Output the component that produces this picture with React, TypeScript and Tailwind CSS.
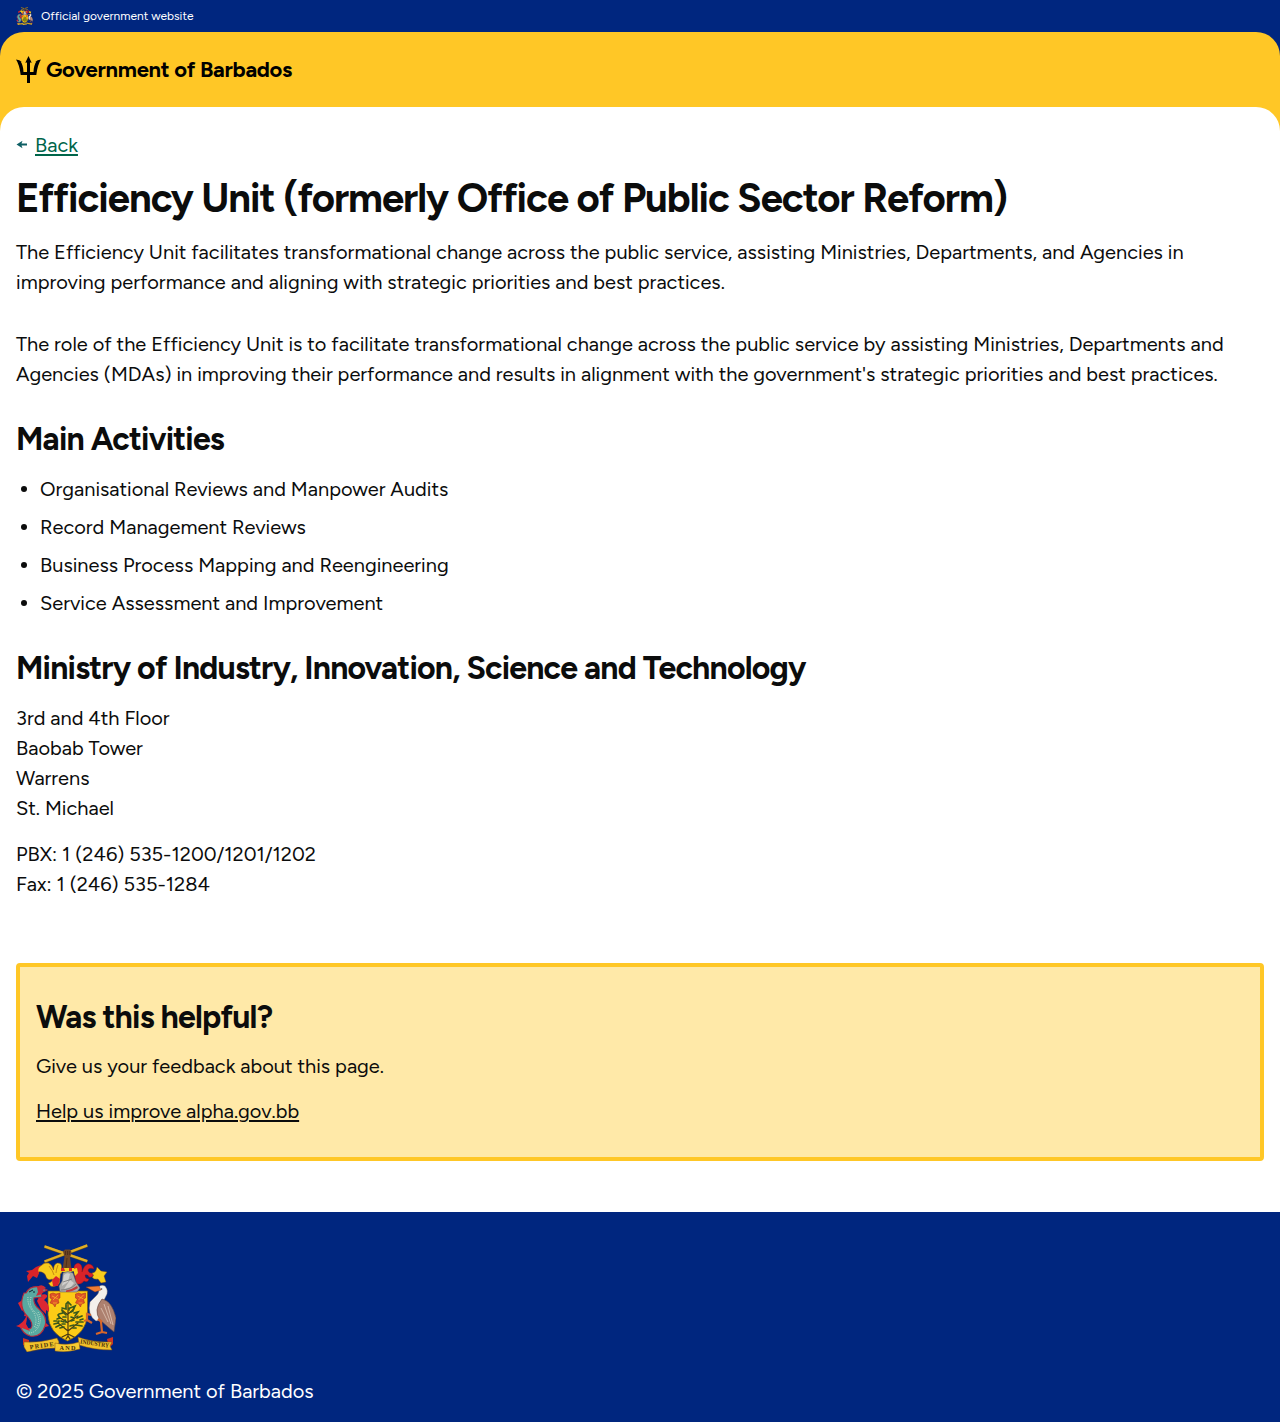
import React from 'react';

function Crest({ className }: { className: string }) {
  return (
    <svg viewBox="0 0 100 108" className={className} aria-label="Coat of arms of Barbados">
      {/* crossed sugar canes held by an arm */}
      <g strokeLinecap="butt" fill="none">
        <path d="M28.500 2.600 71.300 17.300M28.500 17.700 71.300 1.600" stroke="#7a5a10" strokeWidth="3" />
        <path d="M28.500 2.400 71.300 17.100M28.500 17.500 71.300 1.400" stroke="#dfae28" strokeWidth="2.200" />
      </g>
      <path d="M47 7.500 49 5.500 54 5.500 55.500 8 55 11 54 13 55.500 25 46.500 25 48.500 13Z" fill="#6d4426" />
      <path d="M49.500 7v4M51.500 7v4M53.300 7v4M51 14l-1 10" stroke="#3a2110" strokeWidth=".6" fill="none" />
      {/* mantling */}
      <path d="M24.500 22q4-4 8-3 4 2 5 7 0-6 4-7 5 0 4 5 2 4-1 6l-1 9q-4 5-9 3l-2-3q4-1 4-4-4 2-6-1-1-5-5-6-4-1-3 2-5-3 2-8Z" fill="#f8cc1c" stroke="#8f4a10" strokeWidth=".5" />
      <path d="M33 22q4 5 5 9M42 21q-2 5-2 8" stroke="#a8600f" strokeWidth=".6" fill="none" />
      <path d="M10 27l6-1 4-3 5-2q-4 4-2 8-1 3-2 5l-4-2-5 6-1-6 2-3Z" fill="#d92329" />
      <path d="M36 36l4-4 4 3-2 7-5 0Z" fill="#d92329" />
      <path d="M58 27q-1-7 4-8 5 1 4 9 2-7 6-8 5 0 6 5-5-2-6 1 1 4 6 3-1 5-5 4-1-3-4-2 0 4 4 4-1 4-5 2-3 4-8 3Z" fill="#d92329" stroke="#8c1014" strokeWidth=".4" />
      <path d="M57 25l4-1 1 5-3 3M65 31l4-3" fill="#f8cc1c" />
      <path d="M76 29q4 0 5-6l4 4 6 1-3 4 2 6-5 1-3-4q-4 1-6-2 3-1 0-4Z" fill="#f8cc1c" stroke="#8f4a10" strokeWidth=".4" />
      <path d="M43 27v-3h15v3l-7 2Z" fill="#f8cc1c" />
      <path d="M45 24h3l1 3h-4ZM53 24h3l0 3h-3Z" fill="#d92329" />
      {/* shield and helmet */}
      <path d="M32 47H71.500V71Q70 89 51.500 97 33 89 32 71Z" fill="#fccb16" stroke="#7d5b11" strokeWidth=".7" />
      <path d="M47 29q5-3 10 0l3 9 4 6-3 4-17 0-1-6 3-5Z" fill="#aaa9a7" stroke="#595757" strokeWidth=".5" />
      <path d="M48 31q3-3 6-1l-2 8-6 4ZM54 36l4 3-3 4-7 2Z" fill="#d2d0cd" />
      <path d="M45 46q9 0 15-6M47 38l9-3" stroke="#6d6b6a" strokeWidth=".7" fill="none" />
      <path d="M50 46.500q6-1 11-4.500l1 2q-6 4-12 4Z" fill="#c43a38" />
      {/* flowers */}
      <g fill="#df5328" stroke="#a32b1b" strokeWidth=".5">
        <path d="M34 50l3-1 3 1 4-1v5l-2 1 1 4-3 1-1 3-2-3-3-1 2-4-2-1Z" />
        <path d="M59.500 50l3-1 3 1 4-1v5l-2 1 1 4-3 1-1 3-2-3-3-1 2-4-2-1Z" />
      </g>
      <path d="M36 52l6 3M42 51l-5 5M37 59l4 0M61.500 52l6 3M67.500 51l-5 5M62.500 59l4 0" stroke="#f9ae26" strokeWidth=".8" />
      {/* bearded fig tree */}
      <g fill="none" strokeLinecap="round">
        <path d="M52 59v34M52 87l-10-8M52 87l10-8M52 79l-9-6M52 78l10-6M52 71l-6-5M52 70l6-5M52 90l-6 3M52 90l6 3M52 92l-2 3M52 92l2 3" stroke="#4b3a12" strokeWidth="1.200" />
        <path d="M38 80l4-1 1-2M40 83l4-2M41 75l3-1-2-3M43 70l4-1-1-3M46 64l4 1 0-4M50 60l2-2 3 3M54 64l5-2-2 4M58 69l4-1-3 4M61 74l5-2M60 78l7 0M60 81l6 1M44 84l4-1M45 77l3 1M55 73l3 1M54 82l4-1M48 69l2 2M55 68l2-1M47 73l3 0M49 76l1 2M55 77l3-1M46 80l3 0M57 84l3 0M64 76l3-1M38 77l3 0M53 66l0-2" stroke="#38591d" strokeWidth="1.700" />
      </g>
      {/* dolphin */}
      <path d="M24 51q8-2 7 2l-3 3q6 4 5 12l-3-2 0 4-5-5-4-8ZM2 59l6-4 2 9-4 3ZM10 66l-2 6 6 1ZM29 78l4 4-7 2Z" fill="#dc2733" />
      <path d="M10 49q4-8 14-6l7 3-6 3 1 4-8 1q-1 6 5 11 9 8 6 17-4 12-15 10-7-2-10-10l4 1q4 3 7 1 3-4-3-11-10-10-4-24Z" fill="#58a9a1" stroke="#b5283a" strokeWidth="1.100" />
      <path d="M15 53q-3 10 6 17 4 8-2 15M12 53q-1 8 6 16 4 8 0 15M22 68q5 9-1 17-3 4-8 4" stroke="#c3e3d0" strokeWidth="1" strokeDasharray="1 1.200" fill="none" />
      <path d="M0 82q7-2 11-11 0 6-1 9l4 7q-5-2-14-5Z" fill="#dc2733" />
      <path d="M21 43q5-4 9 1l-2 1-2 5-6 2 2-4Z" fill="#c92a37" />
      <path d="M13 48l4-2M17 48h2" stroke="#123" strokeWidth="1" />
      {/* pelican */}
      <path d="M82 44q2-4 7-2 4 5 1 10l-3 6q3 9 0 17l-7 2q-9-6-6-19l7-7q3-3 1-7Z" fill="#f4f1eb" stroke="#85766b" strokeWidth=".4" />
      <path d="M70 43l13-1 2 4-6 2Z" fill="#ef7b32" stroke="#8c3a14" strokeWidth=".4" />
      <path d="M85 45h1.200" stroke="#111" />
      <path d="M86 55q10 2 14 19l-2 14-6-5-8-7q-7-10 2-21Z" fill="#ad806f" stroke="#62453d" strokeWidth=".6" />
      <path d="M88 60l7 20M92 62l5 19M85 64l7 14" stroke="#e0c5b6" strokeWidth=".8" />
      <path d="M82 75l4 3M75 71l-4-1 0 6-3 1M71 76l5 3M85 78l1 10-6 2M86 88l5 1" stroke="#d5662b" strokeWidth="2.200" fill="none" />
      {/* motto ribbon */}
      <path d="M7 94l6 2 0 7-6-2ZM91 95l6-2v7l-4 4Z" fill="#cf3526" />
      <path d="M8 98q17 1 33-4l2 4-2 6q-15 0-30 4l-3-5Z" fill="#f2c22b" stroke="#84520e" strokeWidth=".5" />
      <path d="M62 93q13 5 29 5l5 0-2 4 2 4q-18 0-33-5Z" fill="#f2c22b" stroke="#84520e" strokeWidth=".5" />
      <path d="M39 99q12 3 24-1l1 7q-12 4-25 2Z" fill="#f8cc31" stroke="#84520e" strokeWidth=".5" />
      <g fontFamily="Liberation Serif, serif" fontWeight="700" fontSize="6.200" fill="#46310b">
        <text transform="translate(14 105.300) rotate(-8)" textLength="24">PRIDE</text>
        <text x="43.500" y="106.200" textLength="16">AND</text>
        <text transform="translate(64 99.500) rotate(8)" textLength="29" lengthAdjust="spacingAndGlyphs">INDUSTRY</text>
      </g>
    </svg>
  );
}

function Trident({ className }: { className: string }) {
  return (
    <svg viewBox="0 0 25 27" className={className} fill="#000">
      <path d="M12.500 0 15.700 6.800 14 6.400V16H17.500C17.600 11.500 18.800 8 20.300 5.600L18.900 5.900Q21.500 3.600 25 3.500 21.600 8.500 20.300 18.900H14V27H11V18.900H4.700Q3.400 8.500 0 3.500 3.500 3.600 6.100 5.900L4.700 5.600C6.200 8 7.400 11.500 7.500 16H11V6.400L9.300 6.800Z" />
    </svg>
  );
}

const activities = [
  'Organisational Reviews and Manpower Audits',
  'Record Management Reviews',
  'Business Process Mapping and Reengineering',
  'Service Assessment and Improvement',
];

export default function App() {
  return (
    <div className="flex min-h-[1422px] flex-col bg-[#00267f] font-['Figtree','Lato',sans-serif] text-[20px] leading-[30px] text-[#0b0c0c]">
      <div className="flex h-8 items-center gap-2 px-4 text-white">
        <Crest className="h-[18px] w-[17px]" />
        <span className="text-[12px] leading-4">Official government website</span>
      </div>
      <div className="rounded-t-3xl bg-[#ffc726]">
        <header className="flex h-[75px] items-center gap-[5px] px-4 text-black">
          <Trident className="h-[27px] w-[25px] shrink-0" />
          <span className="text-[22px] font-bold tracking-[-0.3px]">Government of Barbados</span>
        </header>
        <main className="h-[1105px] rounded-t-3xl bg-white px-4 pt-[23px]">
          <a className="flex items-center gap-2 text-[#00654a]">
            <svg viewBox="0 0 11 9" className="-mt-px h-[9px] w-[11px]" fill="#0e5f64">
              <path d="M0.500 4.500 6.500 0.700 5.500 3.500H11V5.500H5.500L6.500 8.300Z" />
            </svg>
            <span className="underline decoration-2 underline-offset-2">Back</span>
          </a>
          <h1 className="mt-[13px] text-[40px] font-bold leading-[50px] tracking-tight">Efficiency Unit (formerly Office of Public Sector Reform)</h1>
          <p className="mt-[14px]">
            The Efficiency Unit facilitates transformational change across the public service, assisting Ministries, Departments, and Agencies in improving performance and aligning with strategic priorities and best practices.
          </p>
          <p className="mt-8">
            The role of the Efficiency Unit is to facilitate transformational change across the public service by assisting Ministries, Departments and Agencies (MDAs) in improving their performance and results in alignment with the government's strategic priorities and best practices.
          </p>
          <h2 className="mt-[30px] text-[32px] font-bold leading-10 tracking-tight">Main Activities</h2>
          <ul className="mt-[15px] flex flex-col gap-2">
            {activities.map((text) => (
              <li key={text} className="flex items-center">
                <span className="ml-[5px] mr-[13px] size-1.5 rounded-full bg-[#0b0c0c]" />
                {text}
              </li>
            ))}
          </ul>
          <h2 className="mt-[30px] text-[32px] font-bold leading-10 tracking-tight">Ministry of Industry, Innovation, Science and Technology</h2>
          <address className="mt-[15px] not-italic">
            3rd and 4th Floor
            <br />
            Baobab Tower
            <br />
            Warrens
            <br />
            St. Michael
          </address>
          <p className="mt-4">
            PBX: 1 (246) 535-1200/1201/1202
            <br />
            Fax: 1 (246) 535-1284
          </p>
          <section className="mt-16 h-[198px] rounded-[4px] border-4 border-[#ffc726] bg-[#ffe9a8] px-4 pt-[30px]">
            <h2 className="text-[32px] font-bold leading-10 tracking-tight">Was this helpful?</h2>
            <p className="mt-[14px]">Give us your feedback about this page.</p>
            <a className="mt-[15px] inline-block underline decoration-2 underline-offset-2">Help us improve alpha.gov.bb</a>
          </section>
        </main>
      </div>
      <footer className="bg-[#00267f] px-4 pt-8 text-white">
        <Crest className="h-[108px] w-[100px]" />
        <p className="mt-6">© 2025 Government of Barbados</p>
      </footer>
    </div>
  );
}
